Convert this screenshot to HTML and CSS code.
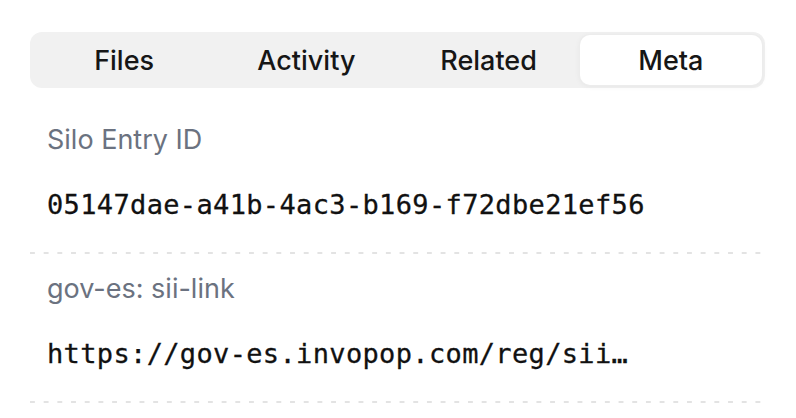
FILE: index.html
```html
<!DOCTYPE html>
<html>
<head>
<meta charset="utf-8">
<link rel="stylesheet" href="styles.css">
</head>
<body>
<div class="page">
  <div class="tabs">
    <div class="tab">Files</div>
    <div class="tab">Activity</div>
    <div class="tab">Related</div>
    <div class="tab active">Meta</div>
  </div>
  <div class="list">
    <div class="row">
      <div class="label">Silo Entry ID</div>
      <div class="value">05147dae-a41b-4ac3-b169-f72dbe21ef56</div>
    </div>
    <div class="row">
      <div class="label">gov-es: sii-link</div>
      <div class="value">https://gov-es.invopop.com/reg/sii…</div>
    </div>
  </div>
</div>
</body>
</html>
```

FILE: styles.css
```css
html, body {
  margin: 0;
  padding: 0;
  background: #ffffff;
}
.page {
  padding: 32px 31px 0 30px;
  font-family: Inter, "Noto Sans", sans-serif;
}
.tabs {
  display: grid;
  grid-template-columns: repeat(4, 1fr);
  background: #f1f1f1;
  border-radius: 12px;
  padding: 3px;
  height: 56px;
  box-sizing: border-box;
}
.tab {
  display: flex;
  align-items: center;
  justify-content: center;
  font-size: 27px;
  font-weight: 500;
  color: #161616;
  border-radius: 10px;
}
.tab.active {
  background: #ffffff;
  box-shadow: 0 0 0 1px #ececec, 0 1px 6px rgba(0,0,0,0.06);
}
.list {
  margin-top: 14px;
}
.row {
  padding: 22px 0 33px 17px;
  background-image: linear-gradient(to right, #e3e3e3 0 5px, transparent 5px);
  background-size: 13.7px 2px;
  background-repeat: repeat-x;
  background-position: 0 100%;
}
.row + .row {
  padding-top: 19px;
}
.label {
  font-size: 27px;
  line-height: 32px;
  color: #6b7280;
}
.value {
  margin-top: 33px;
  font-family: "DejaVu Sans Mono", "Liberation Mono", monospace;
  font-size: 27px;
  line-height: 32px;
  color: #111111;
  letter-spacing: 0.35px;
  -webkit-text-stroke: 0.3px #111111;
  white-space: nowrap;
}
```
